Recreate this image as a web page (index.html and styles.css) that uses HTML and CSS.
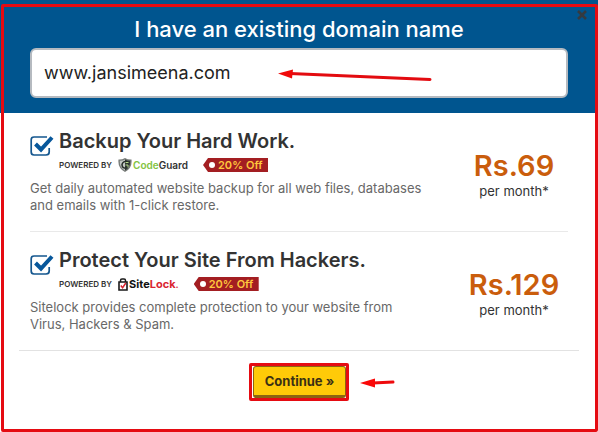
FILE: index.html
```html
<!doctype html>
<html lang="en">
<head>
  <meta charset="utf-8"/>
  <title>Existing domain name</title>
  <link rel="stylesheet" href="styles.css">
</head>
<body>
<main class="modal">
  <header class="modal-header">
    <button class="close" type="button" aria-label="Close">
      <svg width="10" height="10" viewBox="0 0 10 10"><path d="M1 1l8 8M9 1L1 9" stroke="#343a40" stroke-width="2.6"/></svg>
    </button>
    <h1><label for="domain">I have an existing domain name</label></h1>
    <div class="domain-field">
      <input class="domain-input" id="domain" type="text" value="www.jansimeena.com">
      <svg class="arrow arrow-domain" width="154" height="14" viewBox="0 0 154 14" aria-hidden="true">
        <path d="M12 5.5L152 11.5" stroke="#e30b10" stroke-width="3" stroke-linecap="round"/>
        <path d="M0 5.500L15 1.500L14 10.500z" fill="#f00a0a"/>
      </svg>
    </div>
  </header>

  <section class="offer">
    <div class="offer-main">
      <div class="offer-top">
        <span class="tick">
          <input type="checkbox" id="backup" checked>
          <svg width="24" height="22" viewBox="0 0 24 22" aria-hidden="true">
            <path d="M17 2H4Q1.200 2 1.200 4.800V17Q1.200 20 4 20H16Q19.200 20 19.200 17V13" fill="none" stroke="#15578f" stroke-width="1.700"/>
            <path class="mark" d="M5.500 9L11 14.500L22 2.500" fill="none" stroke="#07579b" stroke-width="4"/>
          </svg>
        </span>
        <div class="offer-head">
          <h2><label for="backup">Backup Your Hard Work.</label></h2>
          <div class="meta">
            <span class="powered">POWERED BY</span>
            <span class="brand codeguard">
              <svg width="14" height="14" viewBox="0 0 14 14" aria-hidden="true">
                <path d="M7 0Q10 1.800 13.500 1.500Q14.500 10 7 14Q-.5 10 .5 1.500Q4 1.800 7 0z" fill="#777b78"/>
                <path d="M7 1.500Q9.500 2.900 12.200 2.700Q12.600 9.200 7 12.600z" fill="#303733"/>
                <path d="M7 1.500Q4.500 2.900 1.800 2.700Q1.400 9.200 7 12.600z" fill="#c3c7c4"/>
                <path d="M9.500 4Q5 2.500 4 6.500Q4 10 7.500 10.200" fill="none" stroke="#252b27" stroke-width="1.500"/>
                <path d="M7.500 4.500h3M7.500 7h2.500v2.500" fill="none" stroke="#b5d98a"/>
              </svg>
              <span><span class="green">Code</span>Guard</span>
            </span>
            <span class="tag">20% Off</span>
          </div>
        </div>
      </div>
      <p>Get daily automated website backup for all web files, databases and emails with 1-click restore.</p>
    </div>
    <div class="price"><strong>Rs.69</strong><span>per month*</span></div>
  </section>

  <section class="offer">
    <div class="offer-main">
      <div class="offer-top">
        <span class="tick">
          <input type="checkbox" id="protect" checked>
          <svg width="24" height="22" viewBox="0 0 24 22" aria-hidden="true">
            <path d="M17 2H4Q1.200 2 1.200 4.800V17Q1.200 20 4 20H16Q19.200 20 19.200 17V13" fill="none" stroke="#15578f" stroke-width="1.700"/>
            <path class="mark" d="M5.500 9L11 14.500L22 2.500" fill="none" stroke="#07579b" stroke-width="4"/>
          </svg>
        </span>
        <div class="offer-head">
          <h2><label for="protect">Protect Your Site From Hackers.</label></h2>
          <div class="meta">
            <span class="powered">POWERED BY</span>
            <span class="brand sitelock">
              <svg width="10" height="13" viewBox="0 0 10 13" aria-hidden="true">
                <path d="M2.500 4V2.500Q2.500 1 4 1H6Q7.500 1 7.500 2.500V4" fill="none" stroke="#191919" stroke-width="1.500"/>
                <path d="M1 4H9V12H1z" fill="#fff" stroke="#191919" stroke-width="1.600"/>
                <path d="M2.800 7.500L4.600 9.700L7.800 5" fill="none" stroke="#d92530" stroke-width="1.500"/>
              </svg>
              <span>Site<span class="red">Lock</span><span class="dot">.</span></span>
            </span>
            <span class="tag">20% Off</span>
          </div>
        </div>
      </div>
      <p>Sitelock provides complete protection to your website from Virus, Hackers &amp; Spam.</p>
    </div>
    <div class="price"><strong>Rs.129</strong><span>per month*</span></div>
  </section>

  <footer class="modal-footer">
    <div class="highlight">
      <button class="continue" type="button">Continue »</button>
      <svg class="arrow arrow-continue" width="35" height="10" viewBox="0 0 35 10" aria-hidden="true">
        <path d="M13 5L33 4" stroke="#ee0a0d" stroke-width="3" stroke-linecap="round"/>
        <path d="M0 5L15 .5V9.500z" fill="#fa0808"/>
      </svg>
    </div>
  </footer>
</main>
<div class="frame"></div>
</body>
</html>
```

FILE: styles.css
```css
*{box-sizing:border-box}
:root{
  --blue:#00558f;--red:#e50b12;--ink:#333;--gray:#686868;
}
body{
  margin:0;background:#fff;color:var(--ink);
  font-family:Inter,"Open Sans",sans-serif;font-size:13px;
}
h1,h2,p{margin:0}
.modal{position:relative}
.frame{position:fixed;inset:4px 0 0 1px;border:3px solid var(--red);
  border-radius:2px;pointer-events:none}

.modal-header{background:var(--blue);padding:16px 30px 15px}
h1{color:#fff;font-size:22px;line-height:26px;font-weight:500;text-align:center;
  margin-bottom:6px}
.close{position:absolute;top:10px;right:11px;padding:0;border:0;
  background:none;line-height:0;cursor:pointer}
.domain-field{position:relative}
.domain-input{display:block;width:100%;height:50px;padding:0 12px 2px;
  border:2px solid #b5bac0;border-radius:6px;background:#fff;color:#222;
  font-family:inherit;font-size:18px}
.arrow{position:absolute}
.arrow-domain{left:248px;top:20px}

.offer{display:grid;grid-template-columns:1fr 108px;
  margin:0 30px;padding:16px 0;border-bottom:1px solid #e9e9e9}
.offer-top{display:flex;gap:5px}
.tick{display:grid;width:24px;height:22px;margin-top:6px}
.tick input,.tick svg{grid-area:1/1;margin:0}
.tick input{appearance:none;width:24px;height:22px;cursor:pointer}
.tick svg{pointer-events:none}
.tick input:not(:checked) + svg .mark{display:none}
h2{font-size:20px;line-height:24px;font-weight:600}
.meta{display:flex;align-items:center;height:24px}
.powered{font-size:8px;font-weight:600}
.brand{display:flex;align-items:center;gap:1px;margin:0 15px 0 6px;line-height:16px}
.codeguard{font-size:10px;font-weight:600}
.sitelock{font-size:11px;font-weight:700;color:#111}
.green{color:#83c341}
.red{color:#d92530}
.dot{color:#d92530;font-weight:400}
.tag{position:relative;width:65px;height:14px;padding-left:15px;
  background:#a31e22;color:#ffc83d;font-size:11px;line-height:14px;font-weight:600;
  clip-path:polygon(0 50%,5px 0,100% 0,100% 100%,5px 100%)}
.tag::before{content:"";position:absolute;left:6px;top:4px;
  width:6px;height:6px;border-radius:50%;background:#fff}
.offer p{color:var(--gray);line-height:17px;margin-top:3px;padding-right:30px;
  padding-bottom:1px}
.price{display:flex;flex-direction:column;align-items:center;padding-top:20px}
.price strong{color:#ca5d0c;font-size:29px;line-height:34px;font-weight:600}
.price span{line-height:17px}
.offer + .offer{border-bottom:0}

.modal-footer{display:flex;justify-content:center;margin:0 19px;
  padding:12px 0 28px;border-top:1px solid #e2e2e2}
.highlight{position:relative;display:flex;padding:0 0 0 1px;border:3px solid var(--red);
  border-radius:2px}
.continue{height:32px;padding:0 11px;border:1px solid #8b6411;
  border-bottom-width:3px;border-radius:3px;background:#ffca08;color:#3b3014;
  font-family:inherit;font-size:13px;font-weight:700;cursor:pointer}
.arrow-continue{left:calc(100% + 14px);top:12px}
```
